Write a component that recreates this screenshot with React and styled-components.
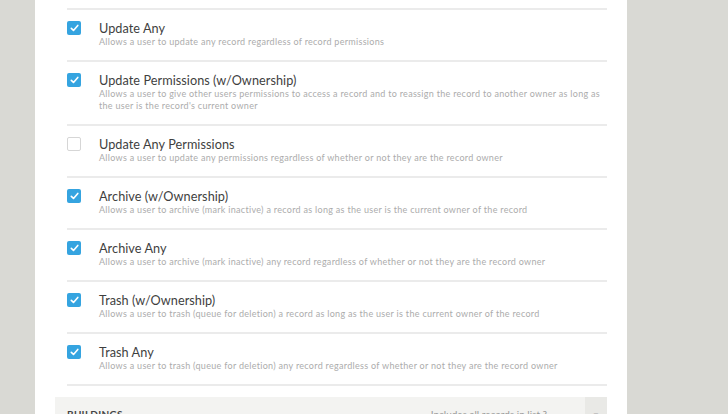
import React from "react";
import styled, { createGlobalStyle } from "styled-components";

const GlobalStyle = createGlobalStyle`
  html, body {
    margin: 0;
    padding: 0;
    background: #d9d9d4;
    overflow: hidden;
  }
  body {
    font-family: Lato, "Open Sans", sans-serif;
  }
`;

const Page = styled.div`
  width: 728px;
  height: 414px;
  display: flex;
  overflow: hidden;
`;

const Panel = styled.div`
  margin-left: 35px;
  width: 592px;
  background: #ffffff;
  padding: 8px 20px 0 20px;
  box-sizing: border-box;
`;

const List = styled.div`
  padding-left: 12px;
`;

const Row = styled.div`
  display: flex;
  align-items: flex-start;
  border-top: 2px solid #ebebeb;
  padding: 10px 0 12px 0;
  &:last-child {
    border-bottom: 2px solid #ebebeb;
  }
`;

const Box = styled.div`
  width: 14px;
  height: 14px;
  margin-top: 1px;
  flex: none;
  border-radius: 2px;
  box-sizing: border-box;
  background: ${(p) => (p.checked ? "#35a4e0" : "#ffffff")};
  border: ${(p) => (p.checked ? "none" : "1px solid #d6d6d6")};
  display: flex;
  align-items: center;
  justify-content: center;
`;

const Text = styled.div`
  margin-left: 18px;
  flex: 1;
  min-width: 0;
`;

const Title = styled.div`
  font-size: 12.7px;
  line-height: 16px;
  color: #3f3f3f;
  letter-spacing: 0.05px;
`;

const Desc = styled.div`
  font-size: 9px;
  line-height: 12px;
  color: #acacac;
  letter-spacing: 0.3px;
  padding-right: 2px;
`;

const Bar = styled.div`
  margin-top: 11px;
  height: 30px;
  display: flex;
  background: #f3f3f1;
`;

const BarLabel = styled.div`
  flex: 1;
  padding: 11px 0 0 12px;
  display: flex;
  justify-content: space-between;
  font-size: 10px;
  font-weight: 700;
  color: #444;
  letter-spacing: 0.3px;
`;

const BarNote = styled.span`
  font-weight: 400;
  color: #9a9a9a;
  margin-right: 38px;
  letter-spacing: 0;
`;

const BarToggle = styled.div`
  width: 22px;
  background: #e9e9e6;
  color: #aaa;
  font-size: 10px;
  text-align: center;
  padding-top: 11px;
`;

const permissions = [
  {
    checked: true,
    title: "Update Any",
    desc: "Allows a user to update any record regardless of record permissions",
  },
  {
    checked: true,
    title: "Update Permissions (w/Ownership)",
    desc: "Allows a user to give other users permissions to access a record and to reassign the record to another owner as long as the user is the record's current owner",
  },
  {
    checked: false,
    title: "Update Any Permissions",
    desc: "Allows a user to update any permissions regardless of whether or not they are the record owner",
  },
  {
    checked: true,
    title: "Archive (w/Ownership)",
    desc: "Allows a user to archive (mark inactive) a record as long as the user is the current owner of the record",
  },
  {
    checked: true,
    title: "Archive Any",
    desc: "Allows a user to archive (mark inactive) any record regardless of whether or not they are the record owner",
  },
  {
    checked: true,
    title: "Trash (w/Ownership)",
    desc: "Allows a user to trash (queue for deletion) a record as long as the user is the current owner of the record",
  },
  {
    checked: true,
    title: "Trash Any",
    desc: "Allows a user to trash (queue for deletion) any record regardless of whether or not they are the record owner",
  },
];

const Check = () => (
  <svg width="9" height="8" viewBox="0 0 9 8">
    <path d="M1.3 4.3 L3.5 6.4 L7.8 1.4" fill="none" stroke="#fff" strokeWidth="1.6" strokeLinecap="round" strokeLinejoin="round" />
  </svg>
);

const App = () => {
  return (
    <Page>
      <GlobalStyle />
      <Panel>
        <List>
          {permissions.map((p) => (
            <Row key={p.title}>
              <Box checked={p.checked}>{p.checked && <Check />}</Box>
              <Text>
                <Title>{p.title}</Title>
                <Desc>{p.desc}</Desc>
              </Text>
            </Row>
          ))}
        </List>
        <Bar>
          <BarLabel>
            BUILDINGS
            <BarNote>Includes all records in list ?</BarNote>
          </BarLabel>
          <BarToggle>=</BarToggle>
        </Bar>
      </Panel>
    </Page>
  );
};

export default App;
